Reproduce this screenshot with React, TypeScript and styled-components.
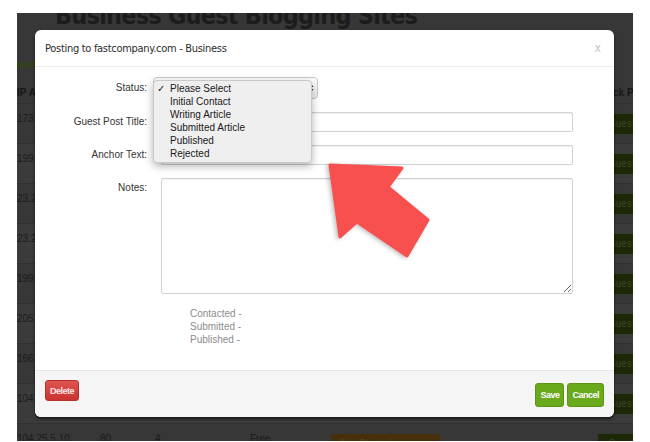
import React from "react";
import styled, { createGlobalStyle, css } from "styled-components";

const GlobalStyle = createGlobalStyle`
	html, body {
		margin: 0;
		padding: 0;
		background: #ffffff;
	}
	body {
		font-family: "Liberation Sans", Arial, sans-serif;
	}
`;

interface SiteRow {
	ip: string;
	port: string;
	pr: string;
	kind: string;
}

const rows: SiteRow[] = [
	{ ip: "173.245.48.10", port: "80", pr: "6", kind: "Free" },
	{ ip: "199.27.128.12", port: "80", pr: "5", kind: "Free" },
	{ ip: "23.235.32.14", port: "80", pr: "7", kind: "Paid" },
	{ ip: "23.235.44.21", port: "80", pr: "5", kind: "Free" },
	{ ip: "199.83.128.9", port: "80", pr: "4", kind: "Free" },
	{ ip: "205.251.192.7", port: "80", pr: "8", kind: "Free" },
	{ ip: "166.78.10.33", port: "80", pr: "6", kind: "Paid" },
	{ ip: "104.16.0.52", port: "80", pr: "5", kind: "Free" },
	{ ip: "104.25.5.10", port: "80", pr: "4", kind: "Free" },
];

const statuses = [
	"Please Select",
	"Initial Contact",
	"Writing Article",
	"Submitted Article",
	"Published",
	"Rejected",
];

export default function App() {
	return (
		<>
			<GlobalStyle />
			<Frame>
				{/* page behind the overlay */}
				<Page>
					<Heading>Business Guest Blogging Sites</Heading>
					<SubTitle>Business</SubTitle>
					<Table>
						<HeadRow>
							<Cell $w={83}>IP Address</Cell>
							<Cell $w={55}>Port</Cell>
							<Cell $w={95}>PR</Cell>
							<Cell $w={81}>Type</Cell>
							<Cell $w={267}>Status</Cell>
							<Cell $w={70}>Track Post</Cell>
						</HeadRow>
						{rows.map((r) => (
							<Row key={r.ip}>
								<Cell $w={83}>{r.ip}</Cell>
								<Cell $w={55}>{r.port}</Cell>
								<Cell $w={95}>{r.pr}</Cell>
								<Cell $w={81}>{r.kind}</Cell>
								<Cell $w={267}>
									<Tag $tone="orange">Not Started</Tag>
								</Cell>
								<Cell $w={70}>
									<Tag $tone="green">Guest Post</Tag>
								</Cell>
							</Row>
						))}
					</Table>
				</Page>

				<Modal>
					<Header>
						<Title>Posting to fastcompany.com - Business</Title>
						<Close>x</Close>
					</Header>
					<Body>
						<Label>Status:</Label>
						<SelectWrap>
							<SelectBox>
								<Arrows viewBox="0 0 6 10" width="6" height="10">
									<path d="M3 0.5 L5.5 4 H0.5 Z" fill="#444" />
									<path d="M3 9.5 L5.5 6 H0.5 Z" fill="#444" />
								</Arrows>
							</SelectBox>
							<Menu>
								{statuses.map((s, i) => (
									<MenuItem key={s}>
										{i === 0 && <Check>✓</Check>}
										{s}
									</MenuItem>
								))}
							</Menu>
						</SelectWrap>

						<Label>Guest Post Title:</Label>
						<TextInput readOnly />

						<Label>Anchor Text:</Label>
						<TextInput readOnly />

						<Label $top>Notes:</Label>
						<Notes readOnly />

						<Dates>
							<div>Contacted -</div>
							<div>Submitted -</div>
							<div>Published -</div>
						</Dates>
					</Body>
					<Footer>
						<Button $tone="danger">Delete</Button>
						<Actions>
							<Button $tone="success">Save</Button>
							<Button $tone="success">Cancel</Button>
						</Actions>
					</Footer>
				</Modal>

				<Pointer viewBox="0 0 120 110" width="120" height="110">
					<polygon
						points="10,10 82,13 68,32 108,65 87,101 37,67 20,82"
						fill="#f84f4f"
						stroke="#f84f4f"
						strokeWidth="3"
						strokeLinejoin="round"
					/>
				</Pointer>
			</Frame>
		</>
	);
}

const Frame = styled.div`
	position: relative;
	margin: 13px 0 0 17px;
	width: 616px;
	height: 428px;
	overflow: hidden;
	background: #373737;
`;

const Page = styled.div`
	display: flex;
	flex-direction: column;
`;

const Heading = styled.div`
	margin-top: -12px;
	padding-left: 38px;
	height: 30px;
	line-height: 30px;
	font-family: "DejaVu Sans Condensed", "DejaVu Sans", sans-serif;
	font-stretch: condensed;
	font-weight: 700;
	font-size: 25px;
	letter-spacing: -0.8px;
	color: #1c1c1c;
	white-space: nowrap;
`;

const SubTitle = styled.div`
	margin: 26px 0 0 -28px;
	line-height: 14px;
	font-size: 11px;
	font-weight: 700;
	color: #2f4a0a;
`;

const Table = styled.div`
	margin-top: 12px;
	display: flex;
	flex-direction: column;
`;

const HeadRow = styled.div`
	display: flex;
	align-items: center;
	height: 20px;
	font-size: 10px;
	font-weight: 700;
	color: #161616;
`;

const Row = styled.div`
	display: flex;
	align-items: flex-start;
	height: 40px;
	box-sizing: border-box;
	padding-top: 8px;
	border-top: 1px solid #303030;
	font-size: 10px;
	color: #1b1b1b;
	&:nth-child(odd) {
		background: #3b3b3b;
	}
`;

const Cell = styled.div<{ $w: number }>`
	flex: 0 0 ${(p) => p.$w}px;
	line-height: 14px;
	white-space: nowrap;
`;

const Tag = styled.div<{ $tone: "orange" | "green" }>`
	display: inline-block;
	margin-top: 2px;
	height: 20px;
	line-height: 20px;
	padding: 0 10px;
	font-size: 10px;
	${(p) =>
		p.$tone === "orange"
			? css`
					width: 89px;
					background: #45300b;
					color: #5a4520;
				`
			: css`
					width: 54px;
					background: #1c2806;
					color: #3a4526;
				`}
`;

const Modal = styled.div`
	position: absolute;
	left: 18px;
	top: 17px;
	width: 579px;
	display: flex;
	flex-direction: column;
	background: #ffffff;
	border-radius: 6px;
	box-shadow: 0 2px 3px rgba(0, 0, 0, 0.6);
`;

const Header = styled.div`
	display: flex;
	align-items: center;
	justify-content: space-between;
	height: 36px;
	padding: 0 13px 0 10px;
	border-bottom: 1px solid #ececec;
`;

const Title = styled.div`
	font-family: "DejaVu Sans Condensed", "DejaVu Sans", sans-serif;
	font-stretch: condensed;
	font-size: 11px;
	letter-spacing: -0.3px;
	color: #2b2b2b;
`;

const Close = styled.div`
	font-family: "DejaVu Sans Condensed", "DejaVu Sans", sans-serif;
	font-stretch: condensed;
	font-size: 12px;
	color: #c4c4c4;
`;

const Body = styled.div`
	display: grid;
	grid-template-columns: 102px 1fr;
	column-gap: 6px;
	row-gap: 13px;
	padding: 10px 41px 24px 10px;
`;

const Label = styled.div<{ $top?: boolean }>`
	text-align: right;
	font-size: 10px;
	line-height: 12px;
	color: #333333;
	align-self: ${(p) => (p.$top ? "start" : "center")};
	padding-top: ${(p) => (p.$top ? "4px" : "0")};
`;

const SelectWrap = styled.div`
	position: relative;
	width: 165px;
	height: 22px;
`;

const SelectBox = styled.div`
	display: flex;
	align-items: center;
	justify-content: flex-end;
	height: 100%;
	box-sizing: border-box;
	padding-right: 3px;
	border: 1px solid #c6c6c6;
	border-radius: 4px;
	background: linear-gradient(#ffffff, #ededed);
`;

const Arrows = styled.svg`
	display: block;
`;

const Menu = styled.div`
	position: absolute;
	left: 0;
	top: 3px;
	width: 159px;
	box-sizing: border-box;
	padding: 1px 0 2px;
	background: #efefef;
	border: 1px solid #c9c9c9;
	border-radius: 4px;
	box-shadow: 0 3px 8px rgba(0, 0, 0, 0.3);
`;

const MenuItem = styled.div`
	position: relative;
	padding-left: 16px;
	line-height: 13px;
	font-size: 10px;
	color: #1a1a1a;
`;

const Check = styled.span`
	position: absolute;
	left: 3px;
	top: 0;
	font-family: "DejaVu Sans", sans-serif;
	font-size: 10px;
`;

const fieldBase = css`
	display: block;
	margin-left: 8px;
	width: calc(100% - 8px);
	box-sizing: border-box;
	border: 1px solid #d2d2d2;
	border-radius: 2px;
	background: #ffffff;
	box-shadow: inset 0 1px 1px rgba(0, 0, 0, 0.06);
	outline: none;
	font-family: "Liberation Sans", Arial, sans-serif;
	font-size: 10px;
`;

const TextInput = styled.input`
	${fieldBase};
	height: 20px;
	padding: 0 4px;
`;

const Notes = styled.textarea`
	${fieldBase};
	height: 116px;
	padding: 4px;
	resize: both;
`;

const Dates = styled.div`
	grid-column: 2;
	margin-left: 37px;
	font-size: 10px;
	line-height: 13px;
	color: #8c8c8c;
`;

const Footer = styled.div`
	display: flex;
	align-items: flex-start;
	justify-content: space-between;
	height: 47px;
	box-sizing: border-box;
	padding: 9px 10px 0 10px;
	background: #f5f5f5;
	border-top: 1px solid #e6e6e6;
	border-radius: 0 0 6px 6px;
`;

const Actions = styled.div`
	display: flex;
	gap: 3px;
	margin-top: 3px;
`;

const Button = styled.div<{ $tone: "danger" | "success" }>`
	display: flex;
	align-items: center;
	padding: 0 4px;
	border-radius: 3px;
	font-size: 9px;
	font-weight: 700;
	letter-spacing: -0.5px;
	color: #ffffff;
	${(p) =>
		p.$tone === "danger"
			? css`
					height: 19px;
					background: linear-gradient(#e05450, #c93430);
					border: 1px solid #b52f2b;
					color: #fde8e8;
				`
			: css`
					height: 22px;
					background: #6aa81c;
					border: 1px solid #5c9417;
				`}
`;

const Pointer = styled.svg`
	position: absolute;
	left: 303px;
	top: 142px;
	filter: drop-shadow(-2px 1px 2px rgba(0, 0, 0, 0.25));
`;
